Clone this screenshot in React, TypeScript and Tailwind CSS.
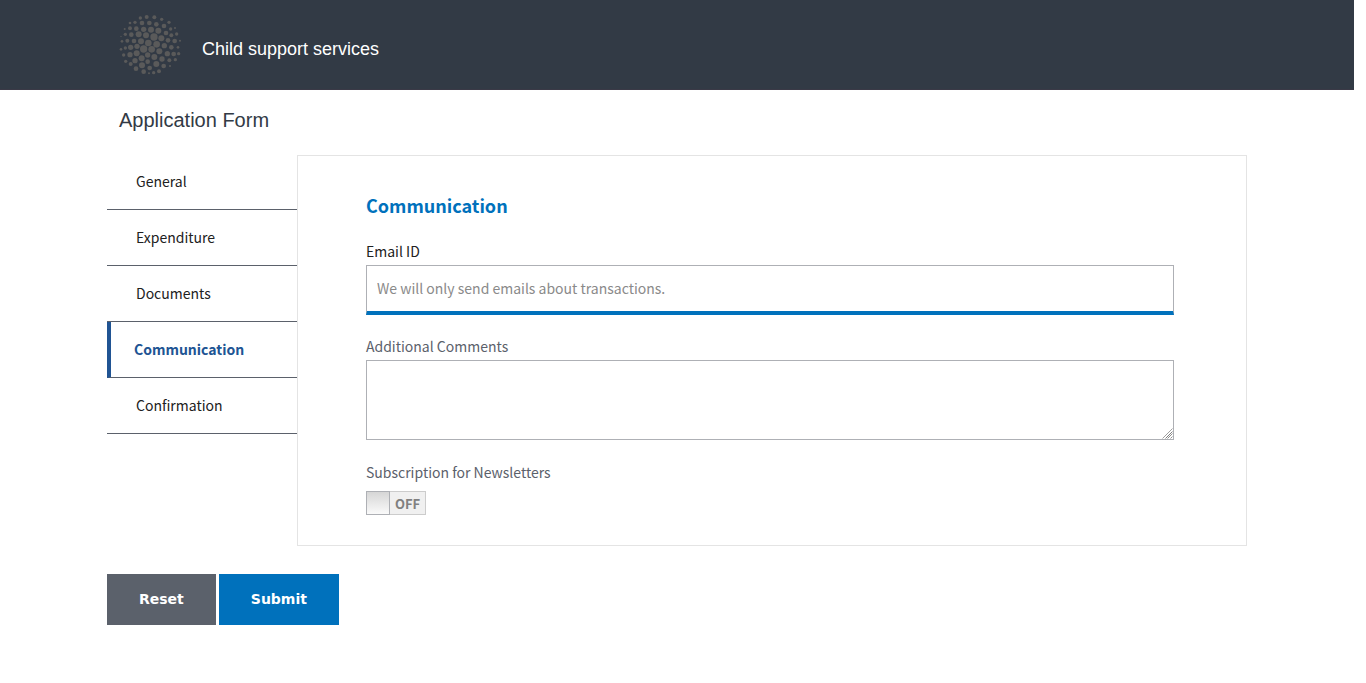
import { useState } from "react";

const DOTS: [number, number, number][] = [
  [91, 39, 5], [110, 36, 6], [133, 37, 6], [155, 43, 5],
  [60, 54, 4], [75, 52, 5], [96, 54, 7], [118, 54, 7], [139, 58, 7], [162, 63, 7], [177, 52, 5],
  [44, 72, 3], [60, 70, 6], [79, 71, 7], [101, 73, 8], [123, 74, 9], [145, 77, 9], [168, 84, 7], [182, 72, 5], [195, 69, 3],
  [33, 94, 2], [46, 88, 5], [64, 89, 7], [86, 88, 9], [108, 91, 9], [132, 96, 11], [154, 100, 9], [184, 91, 6], [200, 87, 5],
  [36, 109, 4], [52, 107, 6], [72, 108, 7], [93, 109, 9], [115, 114, 10], [140, 118, 10], [174, 106, 7], [194, 108, 7], [210, 107, 3],
  [33, 133, 4], [46, 129, 5], [62, 127, 8], [81, 124, 8], [101, 132, 11], [125, 133, 10], [163, 122, 8], [184, 127, 7], [204, 127, 4],
  [41, 150, 5], [60, 149, 8], [80, 145, 9], [148, 139, 9], [113, 150, 8], [172, 146, 8], [191, 147, 7], [206, 146, 5],
  [47, 169, 5], [75, 167, 8], [95, 160, 9], [133, 156, 9], [156, 162, 8], [178, 166, 6], [196, 164, 5],
  [62, 177, 6], [96, 181, 9], [113, 170, 7], [139, 177, 9], [161, 183, 7], [180, 183, 3],
  [78, 191, 7], [119, 189, 7], [101, 200, 7], [117, 205, 3], [131, 203, 5], [147, 199, 6],
];

const TABS = ["General", "Expenditure", "Documents", "Communication", "Confirmation"];

function Logo() {
  return (
    <svg viewBox="27 27 189 189" className="h-[63px] w-[63px] fill-[#5a5a5a]" aria-hidden="true">
      {DOTS.map(([x, y, r]) => (
        <circle key={`${x}-${y}`} cx={x} cy={y} r={r} />
      ))}
    </svg>
  );
}

function ResizeGrip() {
  return (
    <svg
      viewBox="0 0 11 11"
      className="pointer-events-none absolute right-px bottom-px h-[11px] w-[11px] bg-white"
      aria-hidden="true"
    >
      <path d="M0.5 10.5 10.5 0.5" stroke="#a0a0a0" />
      <path d="M3.5 10.5 10.5 3.5" stroke="#808080" />
      <path d="M5.5 10.5 10.5 5.5M8.5 10.5 10.5 8.5" stroke="#909090" />
    </svg>
  );
}

function Tabs({ active, onSelect }: { active: string; onSelect: (tab: string) => void }) {
  return (
    <nav className="w-[190px] shrink-0">
      {TABS.map((tab) => (
        <button
          key={tab}
          type="button"
          onClick={() => onSelect(tab)}
          className={
            tab === active
              ? "block h-14 w-full border-b border-l-4 border-b-[#5b616b] border-l-[#205493] pb-0.5 pl-[23px] text-left font-bold text-[#205493]"
              : "block h-14 w-full border-b border-[#5b616b] pb-0.5 pl-[29px] text-left text-[#212121]"
          }
        >
          {tab}
        </button>
      ))}
    </nav>
  );
}

export default function App() {
  const [active, setActive] = useState("Communication");
  const [subscribed, setSubscribed] = useState(false);

  return (
    <div className="mr-3 bg-white font-['Noto_Sans_CJK_SC',sans-serif] text-sm leading-6">
      <header className="h-[90px] border-b border-[#3a3946] bg-[#323a45]">
        <div className="mx-auto flex max-w-[1140px] gap-5 px-3 pt-[14px]">
          <Logo />
          <p className="pt-[23px] font-['Liberation_Sans',sans-serif] text-lg leading-6 text-white">
            Child support services
          </p>
        </div>
      </header>

      <main className="mx-auto max-w-[1140px]">
        <h1 className="px-3 pt-4 font-['Liberation_Sans',sans-serif] text-xl leading-7 text-[#323a45]">
          Application Form
        </h1>
        <form onSubmit={(e) => e.preventDefault()} onReset={() => setSubscribed(false)}>
          <div className="mt-5 flex items-start">
            <Tabs active={active} onSelect={setActive} />
            <section className="mt-px min-w-0 flex-1 border border-[#e4e4e4] pt-[35px] pr-[72px] pb-[30px] pl-[68px] text-[#5b616b]">
              <h2 className="text-lg leading-7 font-bold text-[#0071bc]">Communication</h2>
              <label htmlFor="email" className="mt-5 block text-[#212121]">
                Email ID
              </label>
              <input
                id="email"
                type="email"
                placeholder="We will only send emails about transactions."
                className="mt-0.5 block h-[50px] w-full border border-b-4 border-[#aeb0b5] border-b-[#0071bc] px-2.5 pb-0.5 text-[#212121] outline-none placeholder:text-[#8a8a8a]"
              />
              <label htmlFor="comments" className="mt-[19px] block">
                Additional Comments
              </label>
              <div className="relative mt-0.5">
                <textarea
                  id="comments"
                  className="block h-20 w-full resize border border-[#aeb0b5] p-2.5 text-[#212121] outline-none"
                />
                <ResizeGrip />
              </div>
              <label htmlFor="newsletter" className="mt-5 block">
                Subscription for Newsletters
              </label>
              <label className="mt-[7px] flex h-6 w-[60px] cursor-pointer border border-[#cccccc] bg-[#f0f0f0] text-[13px] leading-6 font-bold text-[#808080]">
                <input
                  id="newsletter"
                  type="checkbox"
                  checked={subscribed}
                  onChange={(e) => setSubscribed(e.target.checked)}
                  className="peer sr-only"
                />
                <span className="-my-px -ml-px w-6 border border-[#aeb0b5] bg-linear-to-b from-[#d6d6d6] to-[#fafafa] peer-checked:order-1 peer-checked:-mr-px peer-checked:ml-0" />
                <span className="flex-1 text-center">{subscribed ? "ON" : "OFF"}</span>
              </label>
            </section>
          </div>
          <div className="mt-7 flex gap-[3px] font-['DejaVu_Sans',sans-serif] text-sm font-bold text-white">
            <button type="reset" className="h-[51px] bg-[#5b616b] px-8 pb-0.5">
              Reset
            </button>
            <button type="submit" className="h-[51px] bg-[#0071bc] px-8 pb-0.5">
              Submit
            </button>
          </div>
        </form>
      </main>
    </div>
  );
}
